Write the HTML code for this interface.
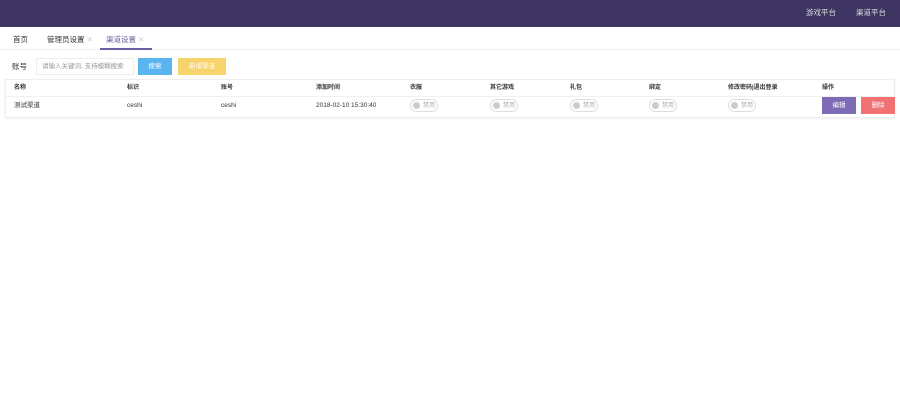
<!DOCTYPE html>
<html><head><meta charset="utf-8"><style>
*{margin:0;padding:0;box-sizing:border-box}
body{width:900px;height:413px;background:#fff;font-family:"Liberation Sans","Noto Sans CJK SC",sans-serif;font-size:7px;color:#333;position:relative;overflow:hidden}
.a{position:absolute;white-space:nowrap;line-height:10px}
.top{left:0;top:0;width:900px;height:27px;background:#3d3461}
.sw{position:absolute;top:99px;width:28px;height:13px;border:1px solid #ddd;border-radius:7px;font-size:6px;color:#aaa;padding-left:12px;padding-top:2px;line-height:9px}
.sw:before{content:"";position:absolute;left:2px;top:2px;width:7px;height:7px;border-radius:50%;background:#ccc}
.th{top:83px;font-weight:bold;font-size:6px}
.td{top:101px;font-size:6.5px}
.a.btn{color:#fff;text-align:center;font-size:6.5px;line-height:17px;height:17px}
</style></head><body>
<div class="a top"></div>
<div class="a" style="left:806px;top:8px;color:#ddd;font-size:7.5px">游戏平台</div>
<div class="a" style="left:856px;top:8px;color:#ddd;font-size:7.5px">渠道平台</div>
<div class="a" style="left:0;top:49px;width:900px;height:1px;background:#eee"></div>
<div class="a" style="left:13px;top:35px;font-size:7.5px">首页</div>
<div class="a" style="left:47px;top:35px;font-size:7.5px">管理员设置 <span style="color:#ccc">✕</span></div>
<div class="a" style="left:106px;top:35px;font-size:7.5px;color:#6a5fa0">渠道设置 <span style="color:#ccc">✕</span></div>
<div class="a" style="left:100px;top:48px;width:52px;height:2px;background:#6a5fa0"></div>
<div class="a" style="left:12px;top:62px;font-size:7.5px">账号</div>
<div class="a" style="left:36px;top:58px;width:98px;height:17px;border:1px solid #eee;color:#999;font-size:6.5px;line-height:15px;padding-left:5px;overflow:hidden">请输入关键词, 支持模糊搜索</div>
<div class="a btn" style="left:138px;top:58px;width:34px;background:#5ab4ef">搜索</div>
<div class="a btn" style="left:178px;top:58px;width:48px;background:#f6d36b">新增渠道</div>
<div class="a" style="left:5px;top:79px;width:890px;height:39px;border:1px solid #eee;box-shadow:0 1px 2px #eee"></div>
<div class="a" style="left:6px;top:96px;width:888px;height:1px;background:#f0f0f0"></div>
<div class="a th" style="left:14px">名称</div><div class="a th" style="left:127px">标识</div><div class="a th" style="left:221px">账号</div><div class="a th" style="left:316px">添加时间</div><div class="a th" style="left:410px">衣服</div><div class="a th" style="left:490px">其它游戏</div><div class="a th" style="left:570px">礼包</div><div class="a th" style="left:649px">绑定</div><div class="a th" style="left:728px">修改密码|退出登录</div><div class="a th" style="left:822px">操作</div>
<div class="a td" style="left:14px">测试渠道</div><div class="a td" style="left:127px">ceshi</div><div class="a td" style="left:221px">ceshi</div><div class="a td" style="left:316px">2018-02-10 15:30:40</div>
<div class="sw" style="left:410px">禁用</div><div class="sw" style="left:490px">禁用</div><div class="sw" style="left:570px">禁用</div><div class="sw" style="left:649px">禁用</div><div class="sw" style="left:728px">禁用</div>
<div class="a btn" style="left:822px;top:97px;width:34px;background:#7e6bb5">编辑</div>
<div class="a btn" style="left:861px;top:97px;width:34px;background:#f07272">删除</div>
</body></html>
